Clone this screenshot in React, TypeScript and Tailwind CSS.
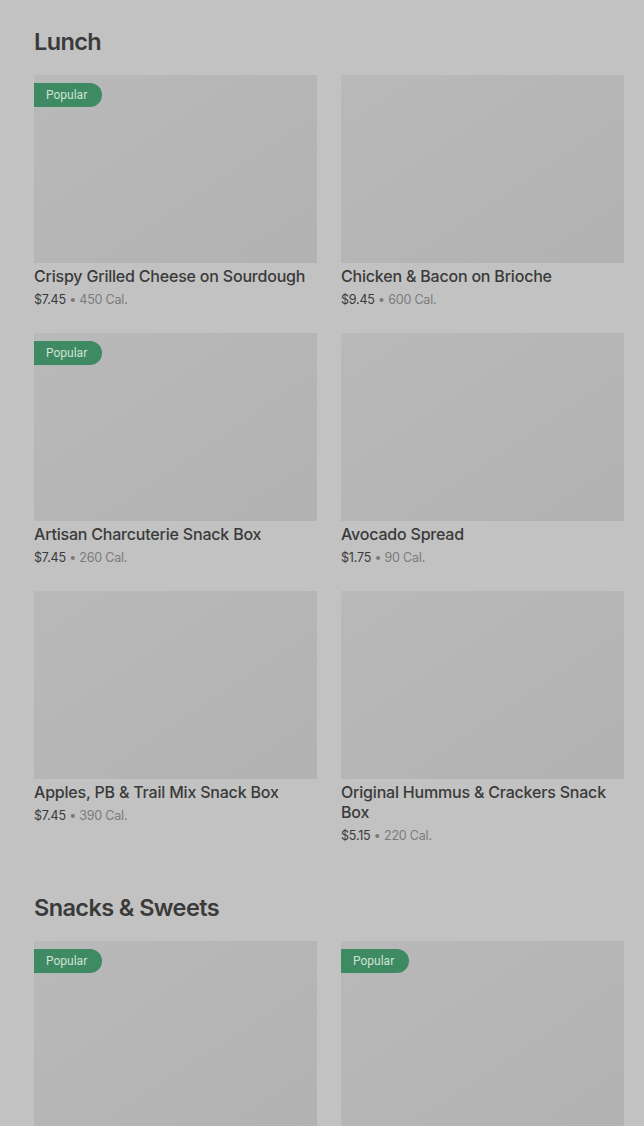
import React from "react";

type Item = { name: string; price: string; cal: string; popular?: boolean };

const lunch: Item[] = [
  { name: "Crispy Grilled Cheese on Sourdough", price: "$7.45", cal: "450 Cal.", popular: true },
  { name: "Chicken & Bacon on Brioche", price: "$9.45", cal: "600 Cal." },
  { name: "Artisan Charcuterie Snack Box", price: "$7.45", cal: "260 Cal.", popular: true },
  { name: "Avocado Spread", price: "$1.75", cal: "90 Cal." },
  { name: "Apples, PB & Trail Mix Snack Box", price: "$7.45", cal: "390 Cal." },
  { name: "Original Hummus & Crackers Snack Box", price: "$5.15", cal: "220 Cal." },
];

const snacks: Item[] = [
  { name: "Chocolate Chip Cookie", price: "$2.45", cal: "370 Cal.", popular: true },
  { name: "Cake Pop", price: "$3.25", cal: "160 Cal.", popular: true },
];

function Card({ item }: { item: Item }) {
  return (
    <div className="flex flex-col">
      <div className="relative h-[188px] w-full bg-gradient-to-br from-[#b9b9b9] to-[#b2b2b2]">
        {item.popular && (
          <span
            className="absolute left-0 top-[8px] flex h-[24px] items-center rounded-r-full bg-[#3e8a62] pl-[12px] pr-[15px] text-[12px] text-[#cfe3d6]"
            style={{ fontFamily: "Roboto, sans-serif" }}
          >
            Popular
          </span>
        )}
      </div>
      <div className="mt-[3px] text-[16px] font-medium leading-[20px] tracking-[-0.2px] text-[#3a3a3a]">{item.name}</div>
      <div className="mt-[5px] text-[12.5px] leading-[18px] tracking-[-0.2px]">
        <span className="text-[#3a3a3a]">{item.price}</span>
        <span className="text-[#7b7b7b]"> • {item.cal}</span>
      </div>
    </div>
  );
}

function Section({ title, items }: { title: string; items: Item[] }) {
  return (
    <section className="pt-[26px]">
      <h2 className="text-[23.5px] font-semibold leading-[32px] tracking-[-0.6px] text-[#3a3a3a]">{title}</h2>
      <div className="mt-[17px] grid grid-cols-2 gap-x-[24px] gap-y-[24px]">
        {items.map((it) => (
          <Card key={it.name} item={it} />
        ))}
      </div>
    </section>
  );
}

export default function App() {
  return (
    <div
      className="min-h-[1126px] w-full overflow-hidden bg-[#c2c2c2] pl-[34px] pr-[20px]"
      style={{ fontFamily: "Inter, 'Liberation Sans', sans-serif" }}
    >
      <Section title="Lunch" items={lunch} />
      <div className="h-[21px]" />
      <Section title="Snacks & Sweets" items={snacks} />
    </div>
  );
}
